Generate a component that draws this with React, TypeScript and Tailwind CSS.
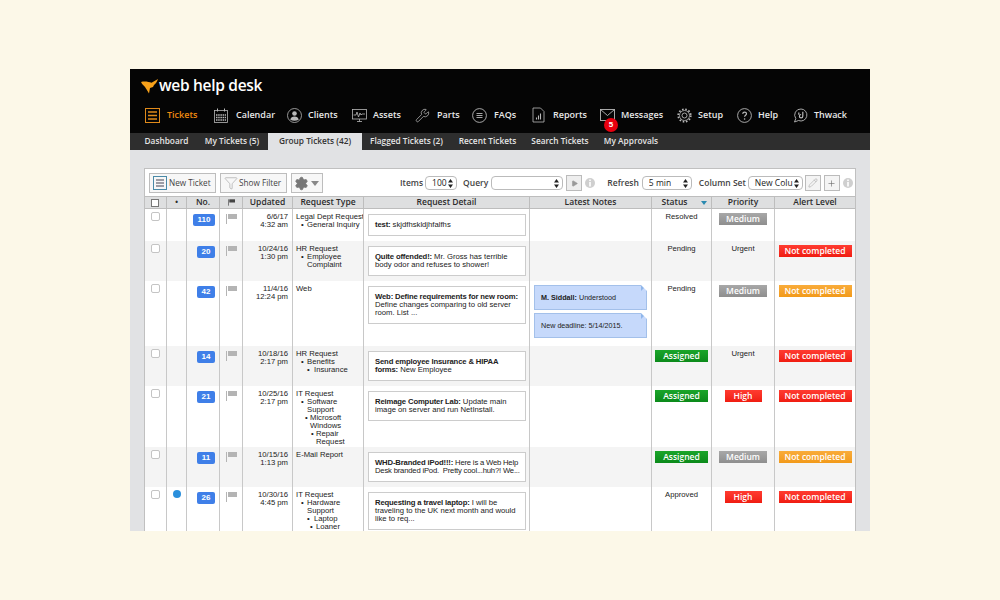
import React from "react";
import { Funnel, Pencil, Plus, Settings, Wrench, Play } from "lucide-react";

const W = ["w-[23px]", "w-[20px]", "w-[33px]", "w-[23px]", "w-[50px]", "w-[71px]", "w-[166px]", "w-[122px]", "w-[60px]", "w-[63px]", "w-[80px]"];

const ui = "font-['Open_Sans',sans-serif]";
const body = "font-['Liberation_Sans',sans-serif]";
const C = "#b9b9b9";

function TicketsIcon() {
  return (
    <svg width="15" height="15" viewBox="0 0 15 15" fill="none" stroke="#e08a1a">
      <rect x="0.500" y="0.500" width="14" height="14" />
      <path d="M3 4h9M3 7.500h9M3 11h9" strokeWidth="1.600" />
    </svg>
  );
}

function CalendarIcon() {
  return (
    <svg width="14" height="15" viewBox="0 0 14 15" fill="none" stroke={C}>
      <rect x="0.500" y="2.500" width="13" height="12" strokeWidth="0.800" />
      <path d="M3.500 0.500v3M10.500 0.500v3" strokeWidth="1" />
      <path d="M2 7h10M2 9.500h10M2 12h10" strokeWidth="1.300" strokeDasharray="1.500 0.700" />
    </svg>
  );
}

function ClientsIcon() {
  return (
    <svg width="15" height="15" viewBox="0 0 15 15" fill="none" stroke={C} strokeWidth="0.800">
      <circle cx="7.500" cy="7.500" r="7" />
      <circle cx="7.500" cy="5.500" r="2.300" fill={C} stroke="none" />
      <path d="M3.300 11.800c.4-2.200 2-3.300 4.200-3.300s3.800 1.100 4.200 3.300c-2.400 1.300-6 1.300-8.400 0z" fill={C} stroke="none" />
    </svg>
  );
}

function AssetsIcon() {
  return (
    <svg width="15" height="15" viewBox="0 0 15 15" fill="none" stroke={C} strokeWidth="0.800">
      <rect x="0.500" y="1.500" width="14" height="9.500" />
      <path d="M1.500 7h2.500l1-3 1.500 5 1.500-4 1 2 1-1h3" />
      <path d="M5 13.500h5M7.500 11v2.500" />
    </svg>
  );
}

function FaqIcon() {
  return (
    <svg width="15" height="15" viewBox="0 0 15 15" fill="none" stroke={C} strokeWidth="0.900">
      <circle cx="7.500" cy="7.500" r="6.900" />
      <path d="M4.500 5.500h6M4.500 7.500h6M4.500 9.500h6" />
    </svg>
  );
}

function ReportsIcon() {
  return (
    <svg width="13" height="16" viewBox="0 0 13 16" fill="none" stroke={C} strokeWidth="0.800">
      <path d="M1 1h7.500L12 4.500V15H1z" />
      <path d="M4.500 12.500v-2M6.500 12.500V8.500M8.500 12.500V6.500" strokeWidth="1.100" />
    </svg>
  );
}

function MailIcon() {
  return (
    <svg width="15" height="12" viewBox="0 0 15 12" fill="none" stroke={C} strokeWidth="0.900">
      <rect x="0.500" y="0.500" width="14" height="11" />
      <path d="M0.500 0.500l7 6 7-6" />
    </svg>
  );
}

function SetupIcon() {
  return (
    <svg width="15" height="15" viewBox="0 0 15 15" fill="none" stroke={C}>
      <circle cx="7.500" cy="7.500" r="5" strokeWidth="0.800" />
      <circle cx="7.500" cy="7.500" r="2.500" strokeWidth="0.900" />
      <circle cx="7.500" cy="7.500" r="6.300" strokeWidth="1.700" strokeDasharray="1.600 1.700" />
    </svg>
  );
}

function HelpIcon() {
  return (
    <svg width="15" height="15" viewBox="0 0 15 15" fill="none" stroke={C} strokeWidth="0.900">
      <circle cx="7.500" cy="7.500" r="6.900" />
      <path d="M5.700 5.900c.1-1.200 1-1.800 1.900-1.800 1.100 0 1.900.7 1.900 1.700 0 1.400-1.900 1.500-1.900 3" strokeWidth="1.200" />
      <circle cx="7.600" cy="11" r="0.800" fill={C} stroke="none" />
    </svg>
  );
}

function ThwackIcon() {
  return (
    <svg width="15" height="15" viewBox="0 0 15 15" fill="none" stroke={C} strokeWidth="0.900">
      <path d="M8 1a6 6 0 1 1-2.500 11.500L1.500 14l1.300-3.500A6 6 0 0 1 8 1z" />
      <path d="M9.800 3.800v4.400a1.700 1.700 0 1 1-1.700-1.700" strokeWidth="1.200" />
      <path d="M5.800 4.500v2.200" strokeWidth="1.200" />
    </svg>
  );
}

function InfoDot({ className = "" }: { className?: string }) {
  return (
    <svg width="10" height="10" viewBox="0 0 10 10" className={`shrink-0 ${className}`}>
      <circle cx="5" cy="5" r="5" fill="#cfcfcf" />
      <rect x="4.200" y="1.500" width="1.600" height="1.600" fill="#fff" />
      <rect x="4.200" y="4" width="1.600" height="4.500" fill="#fff" />
    </svg>
  );
}

function Stepper() {
  return (
    <svg width="5" height="9" viewBox="0 0 5 9" fill="#222" className="shrink-0">
      <path d="M2.500 0L5 3.500H0zM2.500 9L0 5.500h5z" />
    </svg>
  );
}

function Logo() {
  return (
    <div className="h-[34px] flex items-center pl-[11px] gap-[1px]">
      <svg width="17" height="15" viewBox="0 0 17 15" fill="#f7a11a">
        <path d="M0 3C4 2 8 3 10.500 3.800L17 0C16 3 14.500 5 13 6L12 8 9 9 8 14.500C6 11 5 9.500 4 8 2.500 6.500 1 5 0 3z" />
      </svg>
      <span className={`${ui} text-[15.500px] leading-none font-semibold text-white tracking-[-0.300px] pb-[1px]`}>web help desk</span>
    </div>
  );
}

function NavItem({ icon, label, active, width, gap }: { icon: React.ReactNode; label: string; active?: boolean; width: string; gap: string }) {
  return (
    <div className={`relative flex items-center shrink-0 ${width} ${gap}`}>
      {icon}
      <span className={`${ui} text-[9px] font-semibold ${active ? "text-[#f08a10]" : "text-[#e8e8e8]"}`}>{label}</span>
    </div>
  );
}

function TopNav() {
  return (
    <div className="flex items-center h-[30px] pl-[15px] pb-[6px]">
      <NavItem icon={<TicketsIcon />} label="Tickets" active width="w-[69px]" gap="gap-[7px]" />
      <NavItem icon={<CalendarIcon />} label="Calendar" width="w-[73px]" gap="gap-[8px]" />
      <NavItem icon={<ClientsIcon />} label="Clients" width="w-[65px]" gap="gap-[6px]" />
      <NavItem icon={<AssetsIcon />} label="Assets" width="w-[63px]" gap="gap-[6px]" />
      <NavItem icon={<Wrench size={15} color={C} strokeWidth={1.2} />} label="Parts" width="w-[57px]" gap="gap-[7px]" />
      <NavItem icon={<FaqIcon />} label="FAQs" width="w-[60px]" gap="gap-[7px]" />
      <NavItem icon={<ReportsIcon />} label="Reports" width="w-[68px]" gap="gap-[8px]" />
      <div className="relative w-[77px] shrink-0">
        <NavItem icon={<MailIcon />} label="Messages" width="w-[77px]" gap="gap-[6px]" />
        <span className={`${body} absolute left-[4px] top-[10px] w-[14px] h-[14px] rounded-full bg-[#e8000f] text-white text-[8px] font-bold flex items-center justify-center`}>5</span>
      </div>
      <NavItem icon={<SetupIcon />} label="Setup" width="w-[60px]" gap="gap-[6px]" />
      <NavItem icon={<HelpIcon />} label="Help" width="w-[56px]" gap="gap-[6px]" />
      <NavItem icon={<ThwackIcon />} label="Thwack" width="w-[60px]" gap="gap-[6px]" />
    </div>
  );
}

function Tabs() {
  const tabs = [
    { t: "Dashboard", w: "w-[59px]" },
    { t: "My Tickets (5)", w: "w-[72px]" },
    { t: "Group Tickets (42)", w: "w-[94px]" },
    { t: "Flagged Tickets (2)", w: "w-[89px]" },
    { t: "Recent Tickets", w: "w-[73px]" },
    { t: "Search Tickets", w: "w-[72px]" },
    { t: "My Approvals", w: "w-[70px]" },
  ];
  return (
    <div className="h-[17px] shrink-0 bg-[#2e2e2e] flex pl-[7px]">
      {tabs.map(({ t, w }) => (
        <div
          key={t}
          className={`${ui} ${w} flex items-center justify-center whitespace-nowrap text-[8.300px] font-semibold ${t.startsWith("Group") ? "bg-[#e1e2e4] text-[#333]" : "text-[#e6e6e6]"}`}
        >
          {t}
        </div>
      ))}
    </div>
  );
}

function ToolBtn({ children, className = "" }: { children: React.ReactNode; className?: string }) {
  return <div className={`h-[20px] border border-[#bdbdbd] bg-[#f7f7f7] flex items-center shrink-0 ${className}`}>{children}</div>;
}

function Sel({ label, className = "" }: { label: string; className?: string }) {
  return (
    <div className={`h-[14px] shrink-0 border border-[#bbb] rounded-[4px] bg-white flex items-center justify-between pl-[6px] pr-[3px] text-[8.500px] text-[#222] ${className}`}>
      <span className="whitespace-nowrap overflow-hidden">{label}</span>
      <Stepper />
    </div>
  );
}

function Toolbar() {
  const lbl = `${ui} text-[8.500px] font-semibold text-[#444] whitespace-nowrap shrink-0`;
  return (
    <div className={`${ui} h-[28px] flex items-center pl-[4px]`}>
      <ToolBtn className="w-[67px] pl-[3px] gap-[2px]">
        <svg width="14" height="14" viewBox="0 0 14 14" fill="none" stroke="#4a8aa8" className="shrink-0">
          <rect x="0.500" y="0.500" width="13" height="13" />
          <path d="M3 4h8M3 7h8M3 10h8" stroke="#445" strokeWidth="1.100" />
        </svg>
        <span className="text-[8.200px] text-[#444] whitespace-nowrap">New Ticket</span>
      </ToolBtn>
      <ToolBtn className="w-[67px] ml-[4px] pl-[3px] gap-[1px]">
        <Funnel size={14} color="#999" strokeWidth={1} className="shrink-0" />
        <span className="text-[8.200px] text-[#444] whitespace-nowrap">Show Filter</span>
      </ToolBtn>
      <ToolBtn className="w-[32px] ml-[4px] pl-[2px] gap-[2px] bg-[#eee]">
        <Settings size={15} color="#777" fill="#777" strokeWidth={1.5} />
        <span className="w-0 h-0 border-x-[4px] border-x-transparent border-t-[5px] border-t-[#888]" />
      </ToolBtn>
      <span className={`${lbl} ml-[77px]`}>Items</span>
      <Sel label="100" className="w-[32px] ml-[2px]" />
      <span className={`${lbl} ml-[6px]`}>Query</span>
      <Sel label="" className="w-[72px] ml-[3px] bg-[#f4f4f4]" />
      <div className="w-[16px] h-[16px] shrink-0 ml-[3px] border border-[#bbb] bg-[#eee] flex items-center justify-center">
        <Play size={7} color="#999" fill="#999" />
      </div>
      <InfoDot className="ml-[3px]" />
      <span className={`${lbl} ml-[12px]`}>Refresh</span>
      <Sel label="5 min" className="w-[50px] ml-[3px]" />
      <span className={`${lbl} ml-[7px]`}>Column Set</span>
      <Sel label="New Colu" className="w-[55px] ml-[2px]" />
      <div className="w-[16px] h-[16px] shrink-0 ml-[2px] border border-[#bbb] bg-[#f4f4f4] flex items-center justify-center">
        <Pencil size={10} color="#999" strokeWidth={1.2} />
      </div>
      <div className="w-[16px] h-[16px] shrink-0 ml-[3px] border border-[#bbb] bg-[#f4f4f4] flex items-center justify-center">
        <Plus size={9} color="#666" strokeWidth={1.6} />
      </div>
      <InfoDot className="ml-[3px]" />
    </div>
  );
}

function Flag({ color = "#b4b4b4", small }: { color?: string; small?: boolean }) {
  return (
    <svg width={small ? 7 : 11} height={small ? 7 : 10} viewBox="0 0 11 10" fill={color}>
      <rect x="0" y="0" width="1" height="10" />
      <rect x="2" y="0" width="9" height="5" />
    </svg>
  );
}

function Cb({ small }: { small?: boolean }) {
  return <div className={`${small ? "w-[8px] h-[8px] border-[#777] rounded-none" : "w-[9px] h-[9px] border-[#c4c4c4] rounded-[2px]"} border bg-white`} />;
}

function HeaderRow() {
  const cols = ["", "•", "No.", "", "Updated", "Request Type", "Request Detail", "Latest Notes", "Status", "Priority", "Alert Level"];
  return (
    <div className="h-[11px] flex bg-[#dedfe0] border-y border-[#bdbdbd] box-content -mt-px">
      {cols.map((c, i) => (
        <div key={i} className={`${W[i]} ${ui} relative shrink-0 h-full flex items-center justify-center border-r border-[#bdbdbd] last:border-r-0 text-[8.500px] font-semibold text-[#2c2c2c] ${i === 0 ? "-ml-px" : ""}`}>
          {i === 0 && <Cb small />}
          {i === 3 && <Flag color="#444" small />}
          {i === 8 ? <span className="-ml-[14px]">{c}</span> : c}
          {i === 8 && <span className="absolute right-[4px] top-[4px] w-0 h-0 border-x-[3.500px] border-x-transparent border-t-[4px] border-t-[#2a8ab0]" />}
        </div>
      ))}
    </div>
  );
}

function Pill({ text, color, className }: { text: string; color: string; className: string }) {
  return (
    <div className={`${color} ${className} ${ui} h-[12px] flex items-center justify-center text-white text-[8.500px] font-semibold leading-none whitespace-nowrap`}>{text}</div>
  );
}

const GRAY = "bg-gradient-to-b from-[#a8a8a8] to-[#8e8e8e]";
const RED = "bg-gradient-to-b from-[#ff3b30] to-[#f01c10]";
const ORANGE = "bg-gradient-to-b from-[#f9ac3a] to-[#f29a18]";
const GREEN = "bg-gradient-to-b from-[#1aa52a] to-[#0b8a1a]";

type Row = {
  h: string;
  alt?: boolean;
  dot?: boolean;
  tight?: boolean;
  no: string;
  date: string;
  time: string;
  type: [string, number][];
  boldDetail: string;
  detail: string;
  boxH: string;
  notes?: boolean;
  status: string;
  priority: string;
  alert: string;
};

const rows: Row[] = [
  { h: "h-[32px]", no: "110", date: "6/6/17", time: "4:32 am", type: [["Legal Dept Request", 0], ["General Inquiry", 1]], boldDetail: "test:", detail: " skjdfhskldjhfalfhs", boxH: "h-[22px]", status: "Resolved", priority: "Medium", alert: "" },
  { h: "h-[40px]", alt: true, no: "20", date: "10/24/16", time: "1:30 pm", type: [["HR Request", 0], ["Employee", 1], ["Complaint", 2]], boldDetail: "Quite offended!:", detail: " Mr. Gross has terrible\nbody odor and refuses to shower!", boxH: "h-[30px]", status: "Pending", priority: "Urgent", alert: "red" },
  { h: "h-[65px]", no: "42", date: "11/4/16", time: "12:24 pm", type: [["Web", 0]], boldDetail: "Web: Define requirements for new room:", detail: "\nDefine changes comparing to old server\nroom. List ...", boxH: "h-[38px]", notes: true, status: "Pending", priority: "Medium", alert: "orange" },
  { h: "h-[40px]", alt: true, no: "14", date: "10/18/16", time: "2:17 pm", type: [["HR Request", 0], ["Benefits", 1], ["Insurance", 3]], boldDetail: "Send employee Insurance & HIPAA\nforms:", detail: " New Employee", boxH: "h-[30px]", status: "Assigned", priority: "Urgent", alert: "red" },
  { h: "h-[61px]", no: "21", date: "10/25/16", time: "2:17 pm", type: [["IT Request", 0], ["Software", 1], ["Support", 2], ["Microsoft", 4], ["Windows", 5], ["Repair", 6], ["Request", 7]], boldDetail: "Reimage Computer Lab:", detail: " Update main\nimage on server and run NetInstall.", boxH: "h-[30px]", status: "Assigned", priority: "High", alert: "red" },
  { h: "h-[40px]", alt: true, tight: true, no: "11", date: "10/15/16", time: "1:13 pm", type: [["E-Mail Report", 0]], boldDetail: "WHD-Branded iPod!!!:", detail: " Here is a Web Help\nDesk branded iPod.  Pretty cool...huh?! We...", boxH: "h-[30px]", status: "Assigned", priority: "Medium", alert: "orange" },
  { h: "h-[61px]", dot: true, no: "26", date: "10/30/16", time: "4:45 pm", type: [["IT Request", 0], ["Hardware", 1], ["Support", 2], ["Laptop", 3], ["Loaner", 8]], boldDetail: "Requesting a travel laptop:", detail: " I will be\ntraveling to the UK next month and would\nlike to req...", boxH: "h-[38px]", status: "Approved", priority: "High", alert: "red" },
];

// indent of each line in the request type tree, bullet width where the line has one
const levels: { pl: string; bullet?: string }[] = [
  { pl: "pl-0" },
  { pl: "pl-[5px]", bullet: "w-[6px]" },
  { pl: "pl-[11px]" },
  { pl: "pl-[11px]", bullet: "w-[7px]" },
  { pl: "pl-[9px]", bullet: "w-[5px]" },
  { pl: "pl-[14px]" },
  { pl: "pl-[15px]", bullet: "w-[5px]" },
  { pl: "pl-[20px]" },
  { pl: "pl-[14px]", bullet: "w-[6px]" },
];

function Note({ children }: { children: React.ReactNode }) {
  return (
    <div className="relative h-[25px] shrink-0 bg-[#c6d9fb] border border-[#a3c0ea] flex items-center pl-[6px] text-[7.200px]">
      {children}
      <span className="absolute -right-px -top-px w-0 h-0 border-l-[6px] border-b-[6px] border-l-[#8fb6ea] border-b-transparent" />
      <span className="absolute -right-px -top-px w-0 h-0 border-t-[6px] border-l-[6px] border-t-white border-l-transparent" />
    </div>
  );
}

function TicketRow({ r }: { r: Row }) {
  const cell = "shrink-0 h-full border-r border-[#c8c8c8]";
  return (
    <div className={`${r.h} flex ${r.alt ? "bg-[#f4f4f4]" : "bg-white"} ${body} text-[7.700px] leading-[8px] text-[#222]`}>
      <div className={`${W[0]} ${cell} flex justify-center pt-[3px] -ml-px`}><Cb /></div>
      <div className={`${W[1]} ${cell} flex justify-center pt-[3px]`}>
        {r.dot && <div className="w-[8px] h-[8px] rounded-full bg-[#2a8fdc]" />}
      </div>
      <div className={`${W[2]} ${cell} flex justify-end pr-[4px] pt-[5px]`}>
        <div className={`${r.no.length === 3 ? "w-[22px]" : "w-[18px]"} h-[12px] rounded-[2px] bg-[#3f7fe8] text-white text-[8px] font-bold flex items-center justify-center`}>{r.no}</div>
      </div>
      <div className={`${W[3]} ${cell} flex justify-center pt-[5px]`}><Flag /></div>
      <div className={`${W[4]} ${cell} text-right pr-[4px] pt-[4px]`}>
        <div>{r.date}</div>
        <div>{r.time}</div>
      </div>
      <div className={`${W[5]} ${cell} pl-[3px] pt-[4px] overflow-hidden whitespace-nowrap`}>
        {r.type.map(([t, lvl]) => (
          <div key={t} className={`${levels[lvl].pl} flex`}>
            {levels[lvl].bullet && <span className={levels[lvl].bullet}>•</span>}
            <span>{t}</span>
          </div>
        ))}
      </div>
      <div className={`${W[6]} ${cell} pl-[4px] pt-[5px]`}>
        <div className={`${r.boxH} w-[158px] border border-[#ccc] bg-white flex items-center pl-[6px] text-[#222]`}>
          <div className={`whitespace-pre ${r.tight ? "tracking-[-0.200px]" : ""}`}><b className="tracking-[-0.150px]">{r.boldDetail}</b>{r.detail}</div>
        </div>
      </div>
      <div className={`${W[7]} ${cell} pl-[4px] pr-[4px] pt-[4px] flex flex-col gap-[3px]`}>
        {r.notes && (
          <>
            <Note><span><b>M. Siddall:</b> Understood</span></Note>
            <Note><span>New deadline: 5/14/2015.</span></Note>
          </>
        )}
      </div>
      <div className={`${W[8]} ${cell} flex justify-center pt-[4px]`}>
        {r.status === "Assigned" ? <Pill text="Assigned" color={GREEN} className="w-[53px]" /> : <span>{r.status}</span>}
      </div>
      <div className={`${W[9]} ${cell} flex justify-center pt-[4px]`}>
        {r.priority === "Medium" && <Pill text="Medium" color={GRAY} className="w-[48px]" />}
        {r.priority === "High" && <Pill text="High" color={RED} className="w-[37px]" />}
        {r.priority === "Urgent" && <span>Urgent</span>}
      </div>
      <div className="w-[80px] shrink-0 h-full flex justify-center pt-[4px]">
        {r.alert === "red" && <Pill text="Not completed" color={RED} className="w-[73px]" />}
        {r.alert === "orange" && <Pill text="Not completed" color={ORANGE} className="w-[73px]" />}
      </div>
    </div>
  );
}

export default function App() {
  return (
    <div className="w-full h-screen bg-[#fcf8e8] pt-[69px] px-[130px] overflow-hidden">
      <div className="h-[462px] bg-[#e1e2e4] overflow-hidden flex flex-col">
        <div className="bg-[#050505] shrink-0">
          <Logo />
          <TopNav />
        </div>
        <Tabs />
        <div className="pt-[18px] px-[14px] shrink-0">
          <div className="w-[712px] bg-white border border-[#c0c0c0] border-b-0">
            <Toolbar />
            <HeaderRow />
            {rows.map((r) => (
              <TicketRow key={r.no} r={r} />
            ))}
          </div>
        </div>
      </div>
    </div>
  );
}
